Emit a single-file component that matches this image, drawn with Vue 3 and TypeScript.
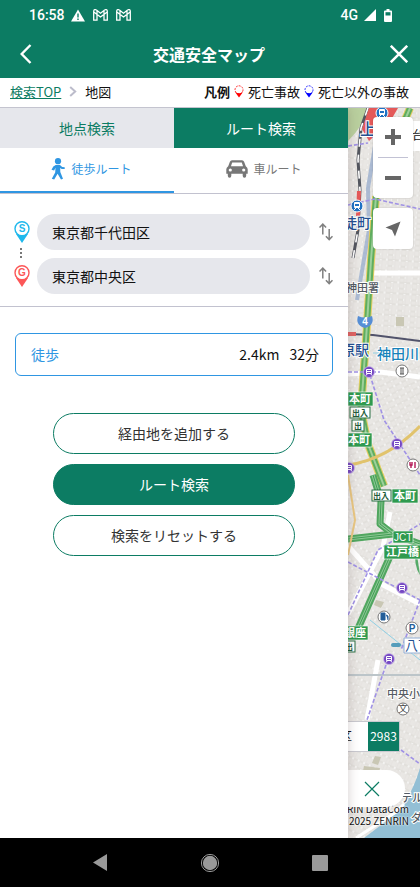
<script setup lang="ts">
import { ref } from 'vue'

interface Place {
  id: string
  mark: string
  label: string
  color: string
}

interface Station {
  x: number
  y: number
}

const places: Place[] = [
  { id: 'start', mark: 'S', label: '出発地', color: '#1eb8ec' },
  { id: 'goal', mark: 'G', label: '目的地', color: '#fc5758' },
]
const values = ref<Record<string, string>>({ start: '東京都千代田区', goal: '東京都中央区' })

const subways: Station[] = [
  { x: 369, y: 372 },
  { x: 397, y: 444 },
  { x: 349, y: 468 },
  { x: 402, y: 588 },
  { x: 389, y: 659 },
]
const trains: Station[] = [
  { x: 382, y: 113 },
  { x: 357, y: 206 },
]

function swapPlaces() {
  values.value = { start: values.value.goal, goal: values.value.start }
}
</script>

<template>
  <div class="screen">
    <header class="top">
      <div class="status">
        <div class="status-group">
          <span class="clock">16:58</span>
          <svg class="warn" width="14" height="13" viewBox="0 0 14 13">
            <path d="M7 0.5L14 12.5H0Z" fill="#fff" />
            <path d="M7 4.5V8.5M7 9.5V11" stroke="#0c7c63" stroke-width="1.4" />
          </svg>
          <svg v-for="n in 2" :key="n" class="mail" width="15" height="12" viewBox="0 0 15 12">
            <path d="M0.7 2.2C0.7 0.5 2.4 0.3 3.4 1.1L7.5 4.2L11.6 1.1C12.6 0.3 14.3 0.5 14.3 2.2V11.2H11V5.4L7.5 8L4 5.4V11.2H0.7ZM0.9 3L4 5.4V1.8M14.1 3L11 5.4V1.8" fill="none" stroke="#fff" stroke-width="1.3" />
          </svg>
        </div>
        <div class="status-group">
          <span class="network">4G</span>
          <svg class="signal" width="12" height="12" viewBox="0 0 12 12"><path d="M12 0V12H0Z" fill="#fff" /></svg>
          <svg class="battery" width="8" height="13" viewBox="0 0 8 13">
            <path d="M2.5 0H5.5V1.5H7A1 1 0 0 1 8 2.5V12A1 1 0 0 1 7 13H1A1 1 0 0 1 0 12V2.5A1 1 0 0 1 1 1.5H2.5Z" fill="#fff" />
            <path d="M1.5 3.2H6.5V6.5H1.5Z" fill="#0c7c63" />
          </svg>
        </div>
      </div>
      <div class="titlebar">
        <button class="icon-button" type="button" aria-label="戻る">
          <svg width="12" height="20" viewBox="0 0 12 20"><path d="M10.5 1L1.7 10L10.5 19" fill="none" stroke="#fff" stroke-width="2.4" /></svg>
        </button>
        <h1>交通安全マップ</h1>
        <button class="icon-button" type="button" aria-label="閉じる">
          <svg width="18" height="18" viewBox="0 0 18 18"><path d="M0.8 0.8L17.2 17.2M17.2 0.8L0.8 17.2" stroke="#fff" stroke-width="2.5" /></svg>
        </button>
      </div>
    </header>

    <div class="subbar">
      <nav class="crumbs">
        <a href="#">検索TOP</a>
        <svg width="8" height="11" viewBox="0 0 8 11"><path d="M1.2 1L6.2 5.5L1.2 10" fill="none" stroke="#bcbccb" stroke-width="2" /></svg>
        <span>地図</span>
      </nav>
      <div class="legend">
        <b>凡例</b>
        <svg width="10" height="13" viewBox="0 0 10 13">
          <circle cx="5" cy="4.8" r="4" fill="#fff" stroke="#f00" stroke-width="0.8" stroke-dasharray="2 1" />
          <path d="M1 7Q5 9.6 9 7L5 12.6Z" fill="#f00" />
        </svg>
        <span>死亡事故</span>
        <svg width="10" height="13" viewBox="0 0 10 13">
          <circle cx="5" cy="4.8" r="4" fill="#fff" stroke="#00f" stroke-width="0.8" stroke-dasharray="2 1" />
          <path d="M1 7Q5 9.6 9 7L5 12.6Z" fill="#00f" />
        </svg>
        <span>死亡以外の事故</span>
      </div>
    </div>

    <main class="content">
      <section class="panel">
        <div class="tabs">
          <button type="button">地点検索</button>
          <button type="button" class="on">ルート検索</button>
        </div>
        <div class="modes">
          <button type="button" class="on">
            <svg width="14" height="22" viewBox="0 0 14 22">
              <circle cx="7" cy="3.2" r="3.1" fill="#2f96e2" />
              <path d="M4.7 7H9L11.2 9L13.7 9.2V10.9H10.7L9.2 10L9.3 14L12 20.7L10 21.6L6.6 15.7L3.2 21.6L0.8 20.7L4.2 14.5L4.5 9.8L3.1 12.5L0.5 11.7L2.3 8.5Z" fill="#2f96e2" />
            </svg>
            徒歩ルート
          </button>
          <button type="button">
            <svg width="22" height="18" viewBox="0 0 22 18">
              <path d="M6 0.2H16Q17.5 0.2 18.1 1.7L19.8 6.2Q21.7 7.5 21.7 9.2V13.8H20.2V15.8Q20.2 17.8 18.4 17.8Q16.7 17.8 16.7 15.8V13.8H5.3V15.8Q5.3 17.8 3.6 17.8Q1.8 17.8 1.8 15.8V13.8H0.3V9.2Q0.3 7.5 2.2 6.2L3.9 1.7Q4.5 0.2 6 0.2Z" fill="#777" />
              <path d="M6.2 2.6H15.8L17 6.2H5Z" fill="#fff" />
              <circle cx="4.3" cy="10" r="1.6" fill="#fff" />
              <circle cx="17.7" cy="10" r="1.6" fill="#fff" />
            </svg>
            車ルート
          </button>
        </div>

        <form class="places" @submit.prevent>
          <div v-for="place in places" :key="place.id" class="place">
            <label :for="place.id" :aria-label="place.label">
              <svg width="16" height="22" viewBox="0 0 16 22">
                <path d="M8 22L2 13H14Z" :fill="place.color" />
                <circle cx="8" cy="7.8" r="7" fill="#fff" :stroke="place.color" stroke-width="1.4" />
                <text x="8" y="11" text-anchor="middle" class="mark" :fill="place.color">{{ place.mark }}</text>
              </svg>
            </label>
            <input :id="place.id" v-model="values[place.id]" type="text">
            <button class="swap" type="button" aria-label="入れ替え" @click="swapPlaces">
              <svg width="14" height="18" viewBox="0 0 14 18">
                <path d="M3.8 11.5V1.4M0.5 4.6L3.8 1.2L7.1 4.6M10.2 6V16.4M6.9 13.2L10.2 16.6L13.5 13.2" fill="none" stroke="#808080" stroke-width="1.5" />
              </svg>
            </button>
          </div>
          <svg class="dots" width="2" height="10" viewBox="0 0 2 10"><path d="M0 0H2V2H0ZM0 4H2V6H0ZM0 8H2V10H0Z" fill="#777" /></svg>
        </form>

        <div class="result">
          <span class="result-mode">徒歩</span>
          <span>2.4km</span>
          <span>32分</span>
        </div>

        <div class="actions">
          <button type="button">経由地を追加する</button>
          <button type="button" class="primary">ルート検索</button>
          <button type="button">検索をリセットする</button>
        </div>
      </section>

      <section class="map">
        <svg class="tiles" viewBox="348 108 72 730" preserveAspectRatio="xMinYMin slice">
          <defs>
            <pattern id="streets" width="13" height="11" patternUnits="userSpaceOnUse" patternTransform="rotate(4)">
              <path d="M0 1H13M1 0V11M1 7H8M8 1V11" stroke="#c6c2ba" stroke-width="2.2" fill="none" />
              <path d="M0 1H13M1 0V11M1 7H8M8 1V11" stroke="#fff" stroke-width="1.2" fill="none" />
            </pattern>
            <pattern id="blocks" width="14" height="12" patternUnits="userSpaceOnUse" patternTransform="rotate(-27)">
              <path d="M0 1H14M1 0V12M8 1V12M0 7H14" stroke="#c6c2ba" stroke-width="2.2" fill="none" />
              <path d="M0 1H14M1 0V12M8 1V12M0 7H14" stroke="#fff" stroke-width="1.2" fill="none" />
            </pattern>
            <pattern id="avenues" width="12" height="15" patternUnits="userSpaceOnUse" patternTransform="rotate(24)">
              <path d="M0 1H12M1 0V15M7 1V15M0 9H12" stroke="#c6c2ba" stroke-width="2.2" fill="none" />
              <path d="M0 1H12M1 0V15M7 1V15M0 9H12" stroke="#fff" stroke-width="1.2" fill="none" />
            </pattern>
          </defs>
          <path d="M348 108H420V838H348Z" fill="#e9e7e4" />
          <path d="M348 108H420V345L348 330Z" fill="url(#streets)" />
          <path d="M348 330L420 345V525L348 540Z" fill="url(#blocks)" />
          <path d="M348 540L420 525V838H348Z" fill="url(#avenues)" />
          <path d="M348 108H368Q365 124 348 141Z" fill="#b9cf9e" />
          <path d="M396 317H404V326H396ZM376 600L384 602L381 608L374 605ZM375 756L381 757L378 765L372 763ZM364 766L380 768L377 781L362 776Z" fill="#c9c7b4" />
          <path d="M420 768Q408 808 385 822L364 838H420Z" fill="#93bfd5" />
          <path d="M356 838L396 812L404 804" stroke="#fff" stroke-width="3" fill="none" />
          <path d="M348 374L380 372L420 377" stroke="#fff" stroke-width="5" fill="none" />
          <path d="M390 512L383 547L372 568L348 614M348 546L383 585L420 604M378 660L367 720M372 273H420" stroke="#fff" stroke-width="5" fill="none" />

          <path d="M368 108L361 128L358 160L360 190L358 230L353 258" stroke="#53565f" stroke-width="3" fill="none" />
          <path d="M368 108L361 128L358 160L360 190L358 230L353 258" stroke="#fff" stroke-width="1.6" stroke-dasharray="8 8" fill="none" />
          <path d="M362 129L369 108H398L391 120L369 141Z" fill="#e45959" />
          <path d="M359 191L358 216" stroke="#e45959" stroke-width="4" />
          <path d="M376 140L368 188L369 230L357 300" stroke="#91a8cc" stroke-width="4" fill="none" opacity="0.7" />
          <path d="M348 334L373 335L420 341" stroke="#51536b" stroke-width="2" fill="none" />
          <path d="M348 334H356" stroke="#e06464" stroke-width="4" />
          <path d="M373 353H388M370 620L420 660" stroke="#90cfe4" stroke-width="1" fill="none" />
          <path d="M348 675H420" stroke="#bcc5c9" stroke-width="2" />

          <g fill="none" stroke-linejoin="round">
            <path d="M410 108L394 146M376 196L371 260L366 340L361 410L368 444L384 486" stroke="#e6ce61" stroke-width="8" />
            <path d="M410 108L394 146M376 196L371 260L366 340L361 410L368 444L384 486" stroke="#5fae5f" stroke-width="6" />
            <path d="M410 108L394 146M376 196L371 260L366 340L361 410L368 444L384 486" stroke="#9ed09a" stroke-width="2" />
            <path d="M373 475L381 501L380 524L393 534L420 544M348 539L393 534M391 554L356 633" stroke="#50a65f" stroke-width="7" />
            <path d="M373 475L381 501L380 524L393 534L420 544M348 539L393 534M391 554L356 633" stroke="#8cc894" stroke-width="3" />
            <path d="M373 475L381 501L380 524L393 534L420 544M348 539L393 534M391 554L356 633" stroke="#419c55" stroke-width="1" />
            <path d="M348 465Q388 459 420 426" stroke="#e1c36c" stroke-width="3" />
            <path d="M348 475L355 520L348 555" stroke="#eac882" stroke-width="2" />
            <path d="M366 136L420 145M348 146L368 143M348 205L375 199L420 209M348 372H380M370 375L384 420L420 475M348 562L420 600M348 615L378 550L420 524M420 600L401 650M386 665L367 720M401 750L420 764" stroke="#a092e5" stroke-width="1.6" stroke-dasharray="4 2" />
          </g>
          <path d="M416 548Q413 565 420 575Z" fill="#55aa68" />

          <g v-for="(stop, i) in trains" :key="`t${i}`">
            <circle :cx="stop.x" :cy="stop.y" r="6" fill="#1f72c4" stroke="#fff" />
            <rect :x="stop.x - 3" :y="stop.y - 4" width="6" height="6" rx="1" fill="#fff" />
            <path :d="`M${stop.x - 2} ${stop.y - 2}h4v2h-4z`" fill="#1f72c4" />
            <path :d="`M${stop.x - 3} ${stop.y + 4}l2 -2m4 2l-2 -2`" stroke="#fff" />
          </g>
          <g v-for="(stop, i) in subways" :key="`s${i}`">
            <circle :cx="stop.x" :cy="stop.y" r="5.5" fill="#7548c3" stroke="#cbb9e8" stroke-width="0.8" />
            <path :d="`M${stop.x - 2.5} ${stop.y + 1.5}v-4h5v4zM${stop.x - 2.5} ${stop.y - 0.5}h5M${stop.x - 3} ${stop.y + 3.5}l1.5 -2m3 0l1.5 2`" stroke="#fff" fill="none" />
          </g>

          <g stroke="#777" fill="#fff">
            <circle cx="402" cy="371" r="6" />
            <circle cx="413" cy="465" r="6" />
            <circle cx="384" cy="617" r="6" />
            <circle cx="412" cy="628" r="6" />
            <circle cx="403" cy="709" r="6" />
          </g>
          <path d="M400 368H404M401 368V374M403 368V374M400 374H404" stroke="#555" fill="none" />
          <path d="M410 462V465H412V462M411 465V468M415 462V468" stroke="#b31755" stroke-width="1.4" fill="none" />
          <path d="M381 613H385V620H381ZM386 615L388 616V620" fill="#245e99" stroke="#245e99" />
          <text x="412" y="632" text-anchor="middle" class="glyph blue">P</text>
          <text x="403" y="712" text-anchor="middle" class="school">文</text>

          <path d="M358 316Q365 319 372 316Q375 325 365 328Q355 325 358 316Z" fill="#568ed5" />
          <text x="365" y="325" text-anchor="middle" class="glyph white">4</text>
          <g class="halo navy">
            <text x="360" y="135" class="l16">上</text>
            <text x="343" y="228" class="l14">徒町</text>
            <text x="341" y="355" class="l14">原駅</text>
          </g>
          <text x="377" y="359" class="halo river l14">神田川</text>
          <text x="346" y="292" class="halo gray l11">神田署</text>
          <text x="387" y="698" class="halo gray l11">中央小</text>
          <text x="401" y="802" class="halo gray l11">テル</text>
          <text x="411" y="822" class="halo gray l11">ダ</text>

          <g fill="#2f9a4f" stroke="#fff" stroke-width="0.6">
            <rect x="348" y="392" width="25" height="14" />
            <rect x="348" y="433" width="24" height="14" />
            <rect x="392" y="489" width="26" height="14" />
            <rect x="393" y="531" width="20" height="12" />
            <rect x="384" y="545" width="38" height="14" />
            <rect x="345" y="626" width="23" height="14" />
          </g>
          <g class="road">
            <text x="349" y="403">本町</text>
            <text x="348" y="444">本町</text>
            <text x="394" y="500">本町</text>
            <text x="386" y="556">江戸橋</text>
            <text x="344" y="637">銀座</text>
            <text x="394" y="541" class="jct">JCT</text>
          </g>
          <g fill="#fff" stroke="#2b7145">
            <rect x="350" y="407" width="20" height="11" />
            <rect x="352" y="420" width="12" height="11" />
            <rect x="372" y="490" width="19" height="11" />
            <rect x="344" y="641" width="11" height="11" />
          </g>
          <g class="gate">
            <text x="352" y="416">出入</text>
            <text x="354" y="429">出</text>
            <text x="373" y="499">出入</text>
            <text x="345" y="650">出</text>
          </g>
          <rect x="391" y="643" width="10" height="4" rx="2" fill="#569dbb" />
          <path d="M404 638H421V653H404Z" fill="#fff" stroke="#92aed4" />
          <text x="405" y="650" class="navy l13">八丁</text>
        </svg>

        <div class="map-search">台東</div>
        <div class="zoom">
          <button type="button" aria-label="拡大"><svg width="16" height="16" viewBox="0 0 16 16"><path d="M6 0H10V6H16V10H10V16H6V10H0V6H6Z" fill="#666" /></svg></button>
          <button type="button" aria-label="縮小"><svg width="16" height="4" viewBox="0 0 16 4"><path d="M0 0H16V4H0Z" fill="#666" /></svg></button>
        </div>
        <button class="locate" type="button" aria-label="現在地">
          <svg width="16" height="16" viewBox="0 0 16 16"><path d="M15.5 0.5L10 15.5L7 9L0.5 6.5Z" fill="#666" /></svg>
        </button>
        <div class="count"><span class="ward">区</span><span class="number">2983</span></div>
        <p class="copyright">© ZENRIN DataCom<br>© 2025 ZENRIN</p>
        <button class="sheet-close" type="button" aria-label="パネルを閉じる">
          <svg width="16" height="16" viewBox="0 0 16 16"><path d="M1 1L15 15M15 1L1 15" stroke="#0c7c63" stroke-width="1.2" /></svg>
        </button>
      </section>
    </main>

    <footer class="system">
      <button type="button" aria-label="戻る"><svg width="14" height="17" viewBox="0 0 14 17"><path d="M14 0V17L0 8.5Z" fill="#999" /></svg></button>
      <button type="button" aria-label="ホーム">
        <svg width="20" height="20" viewBox="0 0 20 20"><circle cx="10" cy="10" r="8.6" fill="none" stroke="#999" /><circle cx="10" cy="10" r="7.2" fill="#999" /></svg>
      </button>
      <button type="button" aria-label="履歴"><svg width="16" height="16" viewBox="0 0 16 16"><rect width="16" height="16" rx="1" fill="#999" /></svg></button>
    </footer>
  </div>
</template>

<style>
body {
  margin: 0;
}
</style>

<style scoped>
* {
  box-sizing: border-box;
}

.screen {
  display: flex;
  flex-direction: column;
  min-height: 100vh;
  background: #fff;
  color: #111;
  font-family: "Noto Sans CJK JP", sans-serif;
  font-size: 14px;
  line-height: 20px;
}

button {
  margin: 0;
  padding: 0;
  border: 0;
  background: none;
  color: inherit;
  font: inherit;
  cursor: pointer;
}

svg {
  display: block;
  flex: none;
}

.top {
  background: #0c7c63;
  color: #fff;
}

.status {
  display: flex;
  align-items: center;
  justify-content: space-between;
  height: 30px;
  padding: 0 28px 0 29px;
  font-family: Roboto, sans-serif;
  font-weight: 500;
}

.status-group {
  display: flex;
  align-items: center;
  gap: 6px;
}

.mail {
  margin-left: 2px;
}

.battery {
  margin-left: 2px;
}

.titlebar {
  display: flex;
  align-items: center;
  justify-content: space-between;
  height: 48px;
  padding: 0 12px 0 10px;
}

.titlebar h1 {
  margin: 0;
  font-size: 16px;
  font-weight: 700;
}

.icon-button {
  display: grid;
  place-items: center;
  width: 32px;
  height: 40px;
}

.icon-button:last-child {
  justify-items: end;
}

.subbar {
  display: flex;
  align-items: center;
  justify-content: space-between;
  height: 30px;
  padding: 0 11px 2px 10px;
  border-bottom: 1px solid #c4c4cf;
  font-size: 13px;
}

.crumbs,
.legend {
  display: flex;
  align-items: center;
}

.crumbs {
  gap: 8px;
}

.crumbs a {
  color: #0c7c63;
  text-decoration: underline;
}

.legend {
  gap: 4px;
  white-space: nowrap;
}

.content {
  display: flex;
  flex: 1;
  overflow: hidden;
}

.panel {
  position: relative;
  z-index: 1;
  flex: 1;
  min-width: 0;
  background: #fff;
  box-shadow: 0 0 10px rgba(80, 50, 50, 0.25);
}

.tabs,
.modes {
  display: grid;
  grid-template-columns: 1fr 1fr;
}

.tabs button {
  height: 40px;
  background: #e6e7ec;
  color: #0c7c63;
}

.tabs .on {
  background: #0c7c63;
  color: #fff;
}

.modes {
  border-bottom: 1px solid #c2c2cf;
}

.modes button {
  display: flex;
  align-items: center;
  justify-content: center;
  gap: 5px;
  height: 45px;
  padding-left: 6px;
  padding-bottom: 2px;
  border-bottom: 2px solid transparent;
  color: #777;
  font-size: 12px;
}

.modes .on {
  gap: 6px;
  padding-left: 9px;
  border-color: #2f96e2;
  color: #2f96e2;
}

.places {
  position: relative;
  display: grid;
  gap: 8px;
  padding: 20px 14px 12px;
  border-bottom: 1px solid #c2c2cf;
}

.place {
  display: flex;
  align-items: center;
}

.mark {
  font: 700 10px "Liberation Sans", sans-serif;
}

.place input {
  flex: 1;
  min-width: 0;
  height: 36px;
  margin: 0 9px 0 7px;
  padding: 0 15px;
  border: 0;
  border-radius: 18px;
  background: #e6e7ec;
  color: #111;
  font: inherit;
}

.swap {
  width: 15px;
}

.dots {
  position: absolute;
  top: 54px;
  left: 20px;
}

.result {
  display: flex;
  align-items: center;
  gap: 10px;
  height: 43px;
  margin: 26px 15px 37px;
  padding: 0 13px 2px 15px;
  border: 1px solid #2f96e2;
  border-radius: 6px;
}

.result-mode {
  flex: 1;
  color: #2f96e2;
}

.actions {
  display: grid;
  gap: 10px;
  padding: 0 53px;
}

.actions button {
  height: 41px;
  padding-bottom: 2px;
  border: 1px solid #0c7c63;
  border-radius: 21px;
  color: #333;
}

.actions .primary {
  background: #0c7c63;
  color: #fff;
}

.map {
  position: relative;
  flex: 0 0 72px;
  overflow: hidden;
}

.tiles {
  position: absolute;
  inset: 0;
  width: 100%;
  height: 100%;
}

.halo {
  stroke: #fff;
  stroke-width: 2px;
  paint-order: stroke;
  font-weight: 500;
}

.navy {
  fill: #234f91;
}

.river {
  fill: #1682ba;
}

.gray {
  fill: #555b63;
}

.blue {
  fill: #245e99;
}

.white {
  fill: #fff;
}

.l11 {
  font-size: 11px;
}

.l13 {
  font-size: 13px;
}

.l14 {
  font-size: 14px;
}

.l16 {
  font-size: 16px;
}

.glyph {
  font: 700 10px "Liberation Sans", sans-serif;
}

.school {
  fill: #444;
  font-size: 9px;
}

.road {
  fill: #fff;
  font-size: 11px;
  font-weight: 700;
}

.jct {
  font: 10px "Liberation Sans", sans-serif;
}

.gate {
  fill: #225c39;
  font-size: 8px;
  font-weight: 700;
}

.map-search {
  position: absolute;
  top: 13px;
  left: 40px;
  width: 40px;
  height: 30px;
  padding-left: 24px;
  overflow: hidden;
  background: #fff;
  font-size: 12px;
  line-height: 28px;
  white-space: nowrap;
}

.zoom,
.locate {
  position: absolute;
  right: 7px;
  width: 40px;
  border-radius: 4px;
  background: #fff;
  box-shadow: 0 0 2px rgba(0, 0, 0, 0.2);
}

.zoom {
  top: 9px;
}

.zoom button {
  display: grid;
  place-items: center;
  width: 30px;
  height: 40px;
  margin: 0 5px;
}

.zoom button:first-child {
  height: 41px;
  border-bottom: 1px solid #c2c2d4;
}

.locate {
  top: 100px;
  display: grid;
  place-items: center;
  height: 41px;
}

.count {
  position: absolute;
  right: 20px;
  bottom: 86px;
  display: flex;
  justify-content: flex-end;
  width: 90px;
  height: 31px;
  background: #fff;
  border: 1px solid #c9c9cf;
  font-size: 12px;
  line-height: 28px;
}

.ward {
  padding-right: 16px;
}

.number {
  width: 31px;
  background: #0c7c63;
  color: #fff;
  text-align: center;
}

.copyright {
  position: absolute;
  right: 11px;
  bottom: 11px;
  margin: 0;
  font-size: 10px;
  line-height: 12px;
  text-align: right;
  white-space: nowrap;
  text-shadow: 0 0 2px #fff, 0 0 2px #fff;
}

.sheet-close {
  position: absolute;
  bottom: 31px;
  left: 0;
  display: grid;
  place-items: center;
  width: 57px;
  height: 37px;
  padding-right: 9px;
  border-radius: 0 19px 19px 0;
  background: #fff;
}

.system {
  display: grid;
  grid-template-columns: repeat(3, 1fr);
  padding: 0 45px;
  height: 49px;
  background: #000;
}

.system button {
  display: grid;
  place-items: center;
}
</style>
